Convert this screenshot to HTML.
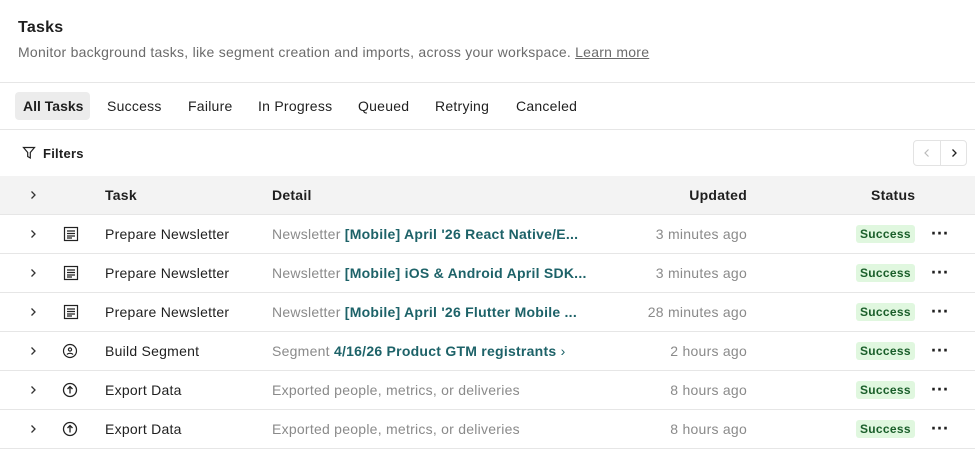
<!DOCTYPE html>
<html><head><style>
*{margin:0;padding:0;box-sizing:border-box}
body{width:975px;height:455px;background:#fff;font-family:"Liberation Sans",sans-serif;color:#1f1f1f;font-size:14px;overflow:hidden;position:relative;letter-spacing:0.25px}
.a{position:absolute;white-space:nowrap}
.line{position:absolute;left:0;width:975px;height:1px;background:#e6e6e6}
.row{position:absolute;left:0;width:975px;height:39px;border-bottom:1px solid #e6e6e6}
.row>*{position:absolute;top:50%;transform:translateY(-50%);white-space:nowrap}
.g{color:#8a8a8a}
.lk{color:#1d6268;font-weight:bold}
.badge{background:#e0f7df;color:#1a5e2a;font-weight:bold;font-size:12px;padding:2px 4px;border-radius:3px;letter-spacing:0.3px}
.dots{left:931px;font-size:18px;font-weight:bold;letter-spacing:0}
</style></head><body>
<div class="a" style="left:18px;top:19px;font-size:16px;font-weight:bold">Tasks</div>
<div class="a g" style="left:18px;top:44px;color:#6b6b6b">Monitor background tasks, like segment creation and imports, across your workspace. <span style="text-decoration:underline">Learn more</span></div>
<div class="line" style="top:82px"></div>
<div class="a" style="left:15px;top:92px;width:75px;height:28px;background:#ececec;border-radius:4px"></div>
<div class="a" style="left:23px;top:98px;font-weight:bold;letter-spacing:0">All Tasks</div>
<div class="a" style="left:107px;top:98px">Success</div>
<div class="a" style="left:188px;top:98px">Failure</div>
<div class="a" style="left:258px;top:98px">In Progress</div>
<div class="a" style="left:358px;top:98px">Queued</div>
<div class="a" style="left:435px;top:98px">Retrying</div>
<div class="a" style="left:516px;top:98px">Canceled</div>
<div class="line" style="top:129px"></div>
<svg class="a" style="left:22px;top:146px" width="14" height="14" viewBox="0 0 14 14" fill="none" stroke="#222" stroke-width="1.2"><path d="M1.5 1.5h11L8.3 6.5v5.5L5.7 10.5V6.5z"/></svg>
<div class="a" style="left:43px;top:146px;font-size:13px;font-weight:bold">Filters</div>
<div class="a" style="left:913px;top:140px;width:54px;height:26px;border:1px solid #e3e3e3;border-radius:4px"></div>
<div class="a" style="left:940px;top:140px;width:1px;height:26px;background:#e3e3e3"></div>
<svg class="a" style="left:922px;top:148px" width="10" height="10" viewBox="0 0 10 10" fill="none" stroke="#bbb" stroke-width="1.2"><path d="M6.5 1.5L3 5l3.5 3.5"/></svg>
<svg class="a" style="left:949px;top:148px" width="10" height="10" viewBox="0 0 10 10" fill="none" stroke="#222" stroke-width="1.3"><path d="M3.5 1.5L7 5l-3.5 3.5"/></svg>

<div class="row" style="top:176px;background:#f3f3f3;font-weight:bold">
<svg style="left:28px" width="10" height="10" viewBox="0 0 10 10" fill="none" stroke="#333" stroke-width="1.3"><path d="M3.5 1.5L7 5l-3.5 3.5"/></svg>
<span style="left:105px">Task</span><span style="left:272px">Detail</span><span style="right:228px">Updated</span><span style="left:871px">Status</span></div>

<div class="row" style="top:215px">
<svg style="left:28px" width="10" height="10" viewBox="0 0 10 10" fill="none" stroke="#333" stroke-width="1.3"><path d="M3.5 1.5L7 5l-3.5 3.5"/></svg>
<svg style="left:63px" width="16" height="16" viewBox="0 0 16 16" fill="none" stroke="#222" stroke-width="1.2"><rect x="1.5" y="1.5" width="13" height="13"/><path d="M4 5h8M4 7.5h8M4 10h8M4 12h5"/></svg>
<span style="left:105px">Prepare Newsletter</span><span style="left:272px"><span class="g">Newsletter</span> <span class="lk">[Mobile] April '26 React Native/E...</span></span><span class="g" style="right:228px">3 minutes ago</span><span class="badge" style="left:856px">Success</span><span class="dots">···</span></div>

<div class="row" style="top:254px">
<svg style="left:28px" width="10" height="10" viewBox="0 0 10 10" fill="none" stroke="#333" stroke-width="1.3"><path d="M3.5 1.5L7 5l-3.5 3.5"/></svg>
<svg style="left:63px" width="16" height="16" viewBox="0 0 16 16" fill="none" stroke="#222" stroke-width="1.2"><rect x="1.5" y="1.5" width="13" height="13"/><path d="M4 5h8M4 7.5h8M4 10h8M4 12h5"/></svg>
<span style="left:105px">Prepare Newsletter</span><span style="left:272px"><span class="g">Newsletter</span> <span class="lk">[Mobile] iOS &amp; Android April SDK...</span></span><span class="g" style="right:228px">3 minutes ago</span><span class="badge" style="left:856px">Success</span><span class="dots">···</span></div>

<div class="row" style="top:293px">
<svg style="left:28px" width="10" height="10" viewBox="0 0 10 10" fill="none" stroke="#333" stroke-width="1.3"><path d="M3.5 1.5L7 5l-3.5 3.5"/></svg>
<svg style="left:63px" width="16" height="16" viewBox="0 0 16 16" fill="none" stroke="#222" stroke-width="1.2"><rect x="1.5" y="1.5" width="13" height="13"/><path d="M4 5h8M4 7.5h8M4 10h8M4 12h5"/></svg>
<span style="left:105px">Prepare Newsletter</span><span style="left:272px"><span class="g">Newsletter</span> <span class="lk">[Mobile] April '26 Flutter Mobile ...</span></span><span class="g" style="right:228px">28 minutes ago</span><span class="badge" style="left:856px">Success</span><span class="dots">···</span></div>

<div class="row" style="top:332px">
<svg style="left:28px" width="10" height="10" viewBox="0 0 10 10" fill="none" stroke="#333" stroke-width="1.3"><path d="M3.5 1.5L7 5l-3.5 3.5"/></svg>
<svg style="left:62px" width="16" height="16" viewBox="0 0 16 16" fill="none" stroke="#222" stroke-width="1.2"><circle cx="8" cy="8" r="6.5"/><circle cx="8" cy="6.5" r="1.6"/><path d="M5 11.5c1-1.6 5-1.6 6 0"/></svg>
<span style="left:105px">Build Segment</span><span style="left:272px"><span class="g">Segment</span> <span class="lk">4/16/26 Product GTM registrants</span> <span class="lk" style="font-weight:normal">›</span></span><span class="g" style="right:228px">2 hours ago</span><span class="badge" style="left:856px">Success</span><span class="dots">···</span></div>

<div class="row" style="top:371px">
<svg style="left:28px" width="10" height="10" viewBox="0 0 10 10" fill="none" stroke="#333" stroke-width="1.3"><path d="M3.5 1.5L7 5l-3.5 3.5"/></svg>
<svg style="left:62px" width="16" height="16" viewBox="0 0 16 16" fill="none" stroke="#222" stroke-width="1.3"><circle cx="8" cy="8" r="6.5"/><path d="M8 11.5V4.8M5.5 7L8 4.5 10.5 7"/></svg>
<span style="left:105px">Export Data</span><span class="g" style="left:272px">Exported people, metrics, or deliveries</span><span class="g" style="right:228px">8 hours ago</span><span class="badge" style="left:856px">Success</span><span class="dots">···</span></div>

<div class="row" style="top:410px">
<svg style="left:28px" width="10" height="10" viewBox="0 0 10 10" fill="none" stroke="#333" stroke-width="1.3"><path d="M3.5 1.5L7 5l-3.5 3.5"/></svg>
<svg style="left:62px" width="16" height="16" viewBox="0 0 16 16" fill="none" stroke="#222" stroke-width="1.3"><circle cx="8" cy="8" r="6.5"/><path d="M8 11.5V4.8M5.5 7L8 4.5 10.5 7"/></svg>
<span style="left:105px">Export Data</span><span class="g" style="left:272px">Exported people, metrics, or deliveries</span><span class="g" style="right:228px">8 hours ago</span><span class="badge" style="left:856px">Success</span><span class="dots">···</span></div>
</body></html>
